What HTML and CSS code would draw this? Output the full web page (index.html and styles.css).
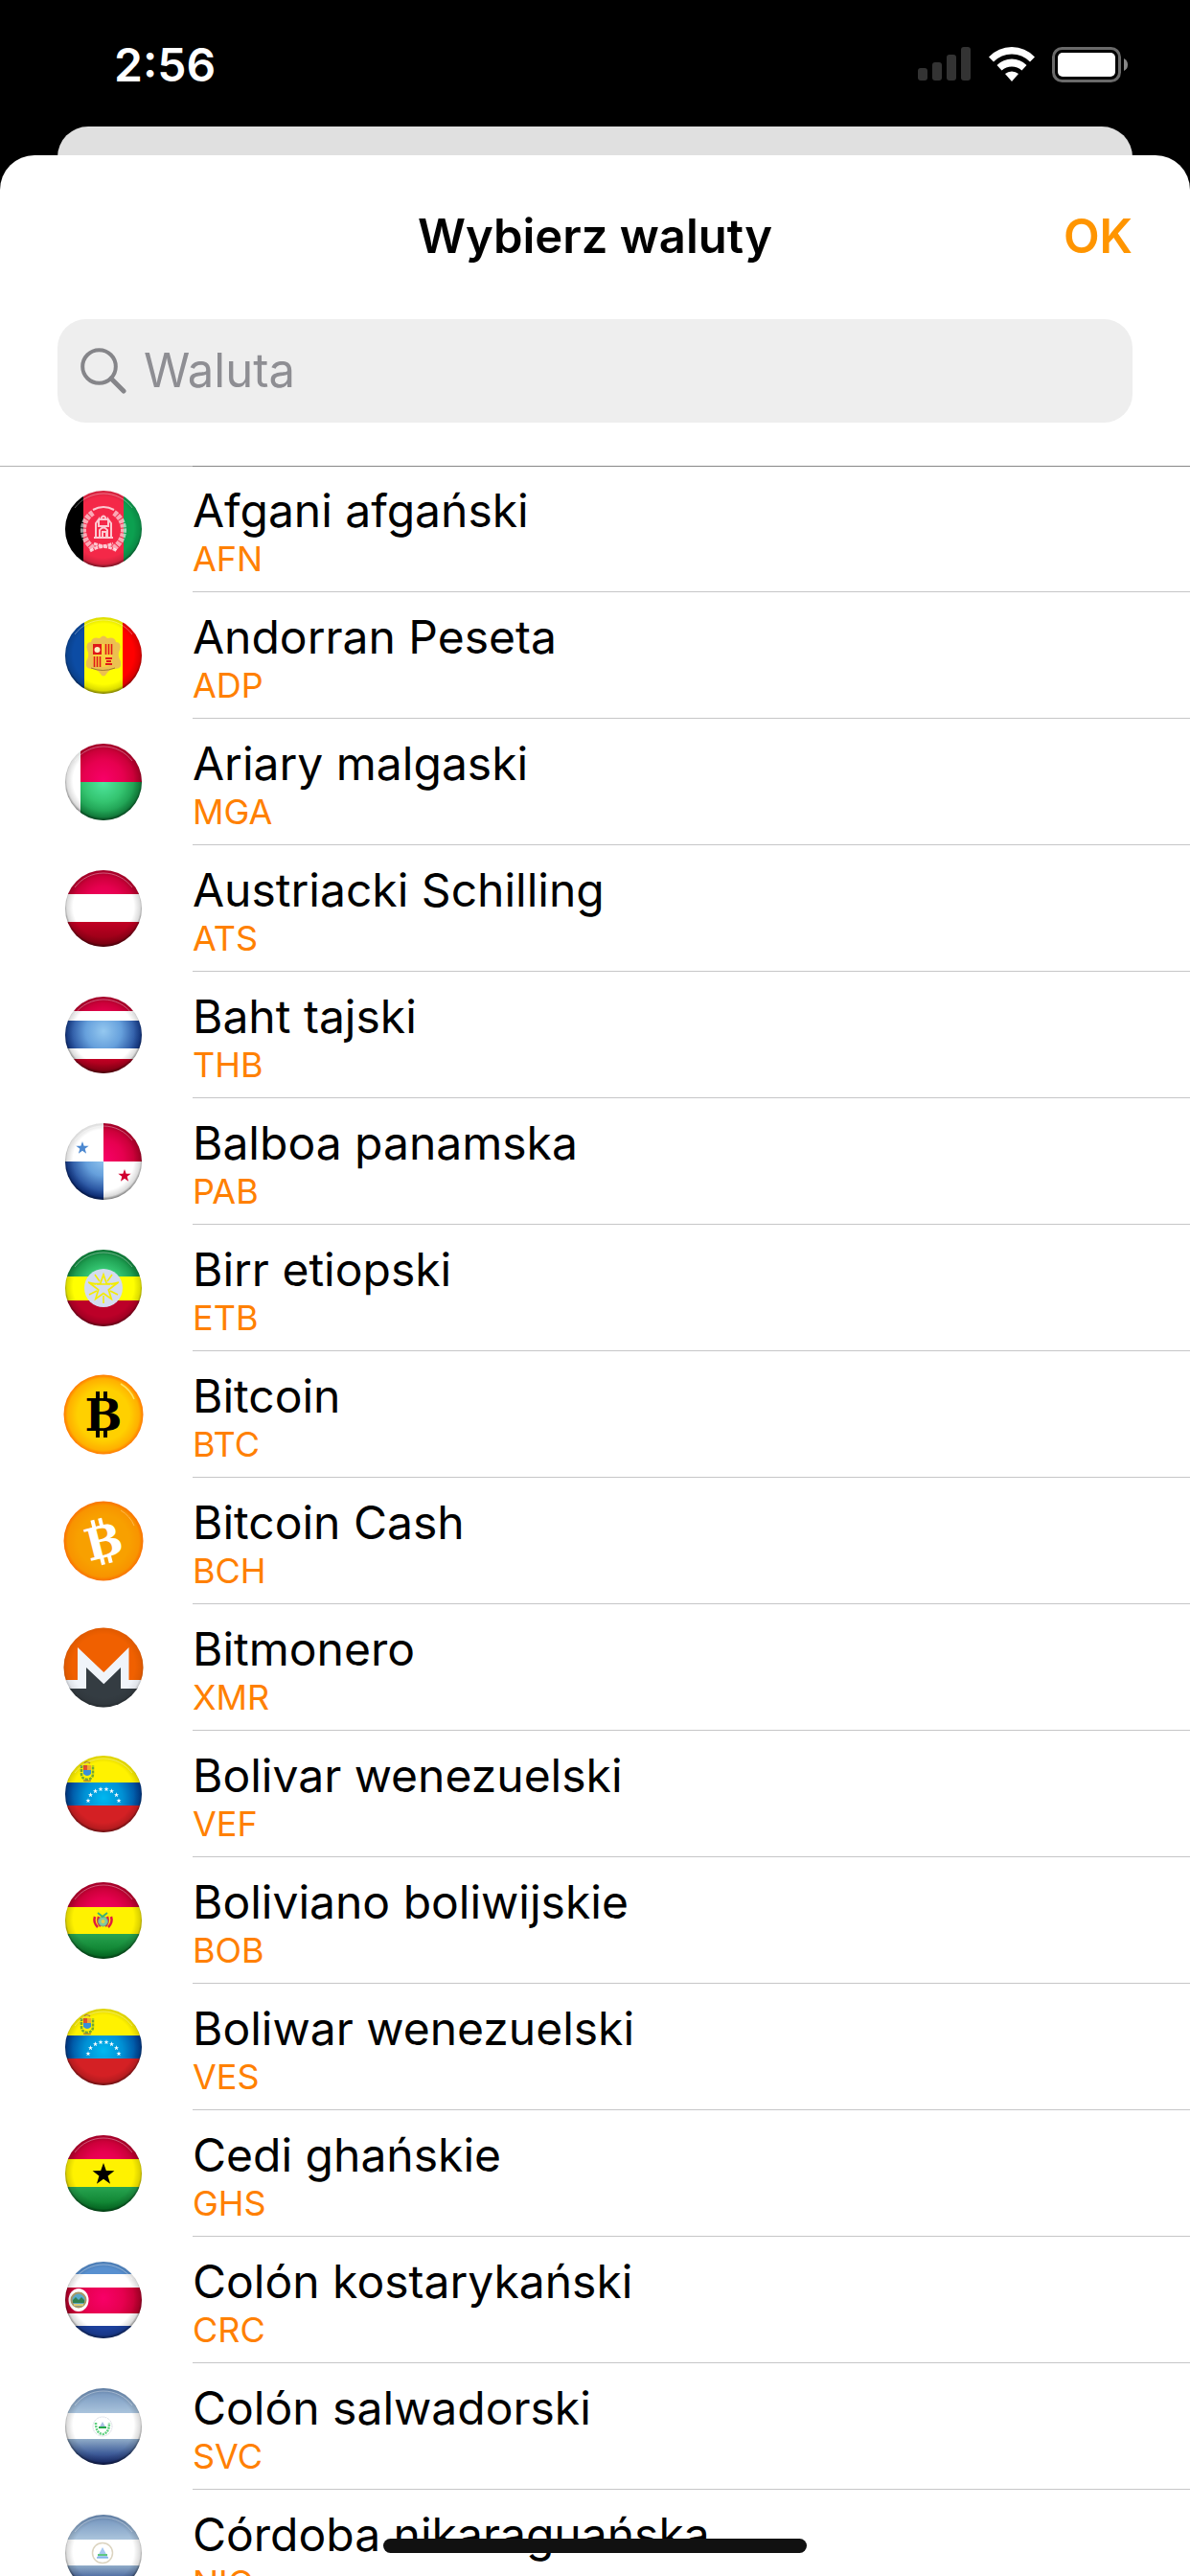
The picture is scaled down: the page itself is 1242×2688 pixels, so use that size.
FILE: index.html
```html
<!DOCTYPE html>
<html lang="pl">
  <head>
    <meta charset="UTF-8" />
    <meta name="viewport" content="width=device-width, initial-scale=1.0" />
    <title>Wybierz waluty</title>
    <link rel="stylesheet" href="styles.css">
  </head>
  <body>
    <!-- Shared shapes and flags used more than once -->
    <svg class="defs" aria-hidden="true">
      <defs>
        <clipPath id="round"><circle cx="42" cy="42" r="40" /></clipPath>
        <clipPath id="coin"><circle cx="42" cy="42" r="41.5" /></clipPath>
        <radialGradient id="shade" cx="0.5" cy="0.48" r="0.52">
          <stop offset="0.76" stop-color="#000" stop-opacity="0" />
          <stop offset="0.92" stop-color="#000" stop-opacity="0.14" />
          <stop offset="1" stop-color="#000" stop-opacity="0.55" />
        </radialGradient>
        <radialGradient id="red" gradientUnits="userSpaceOnUse" cx="42" cy="40" r="42">
          <stop offset="0" stop-color="#f80068" />
          <stop offset="0.5" stop-color="#e6004f" />
          <stop offset="1" stop-color="#b00024" />
        </radialGradient>
        <linearGradient id="darkred" x1="0" y1="0" x2="0" y2="1">
          <stop offset="0" stop-color="#c20024" />
          <stop offset="1" stop-color="#840010" />
        </linearGradient>
        <radialGradient id="blue" gradientUnits="userSpaceOnUse" cx="42" cy="38" r="42">
          <stop offset="0" stop-color="#94c8f0" />
          <stop offset="0.45" stop-color="#66a0dc" />
          <stop offset="1" stop-color="#0c3084" />
        </radialGradient>
        <radialGradient id="cyan" gradientUnits="userSpaceOnUse" cx="42" cy="46" r="40">
          <stop offset="0" stop-color="#00b8f0" />
          <stop offset="0.5" stop-color="#0090d4" />
          <stop offset="1" stop-color="#003c90" />
        </radialGradient>
        <linearGradient id="green" x1="0" y1="0" x2="0" y2="1">
          <stop offset="0" stop-color="#28a450" />
          <stop offset="1" stop-color="#007020" />
        </linearGradient>
        <radialGradient id="mint" gradientUnits="userSpaceOnUse" cx="42" cy="42" r="42">
          <stop offset="0" stop-color="#50e8a0" />
          <stop offset="0.5" stop-color="#34c470" />
          <stop offset="1" stop-color="#0c8038" />
        </radialGradient>
        <linearGradient id="steel" x1="0" y1="0" x2="0" y2="1">
          <stop offset="0" stop-color="#6a8cb8" />
          <stop offset="1" stop-color="#aac4dc" />
        </linearGradient>
        <linearGradient id="navy" x1="0" y1="0" x2="0" y2="1">
          <stop offset="0" stop-color="#90acc8" />
          <stop offset="0.5" stop-color="#42609c" />
          <stop offset="1" stop-color="#0c1c64" />
        </linearGradient>
        <radialGradient id="gold" cx="0.5" cy="0.5" r="0.5">
          <stop offset="0.65" stop-color="#ffd000" />
          <stop offset="0.9" stop-color="#ffb000" />
          <stop offset="1" stop-color="#ff7800" />
        </radialGradient>
        <radialGradient id="amber" cx="0.5" cy="0.5" r="0.5">
          <stop offset="0.65" stop-color="#f8a000" />
          <stop offset="0.9" stop-color="#f89400" />
          <stop offset="1" stop-color="#fa7000" />
        </radialGradient>

        <path id="star" d="M0-10 2.35-3.24 9.51-3.09 3.8 1.24 5.88 8.09 0 4 -5.88 8.09 -3.8 1.24 -9.51-3.09 -2.35-3.24Z" />
        <g id="gloss">
          <circle cx="42" cy="42" r="40" fill="url(#shade)" />
          <path d="M12 20A37.500 37.500 0 0 1 72 20" fill="none" stroke="#fff" stroke-opacity="0.35" />
        </g>

        <symbol id="venezuela" viewBox="0 0 84 84">
          <g clip-path="url(#round)">
            <path d="M0 0h84v30H0z" fill="#fff200" />
            <path d="M0 30h84v24H0z" fill="url(#cyan)" />
            <path d="M0 54h84v30H0z" fill="#d42024" />
            <path d="M19 12v9q0 5 6 6 6-1 6-6v-9" fill="none" stroke="#70a830" stroke-width="2.500" stroke-dasharray="3 1" />
            <path d="M21 12h4v5h-4z" fill="#e05030" />
            <path d="M25 12h4v5h-4z" fill="#f0a830" />
            <path d="M21 17h8v4q-4 4-8 0z" fill="#3890d8" />
            <path d="M22 10q3-3 6 0M21 28q4 1 8 0" fill="none" stroke="#b89030" stroke-width="1.500" />
            <g fill="#fff">
              <use href="#star" transform="translate(26 49) scale(.27)" />
              <use href="#star" transform="translate(28.500 43) scale(.27)" />
              <use href="#star" transform="translate(33.500 39) scale(.27)" />
              <use href="#star" transform="translate(39 37) scale(.27)" />
              <use href="#star" transform="translate(45 37) scale(.27)" />
              <use href="#star" transform="translate(50.500 39) scale(.27)" />
              <use href="#star" transform="translate(55.500 43) scale(.27)" />
              <use href="#star" transform="translate(58 49) scale(.27)" />
            </g>
          </g>
          <use href="#gloss" />
        </symbol>
        <symbol id="bluewhite" viewBox="0 0 84 84">
          <g clip-path="url(#round)">
            <path d="M0 0h84v84H0z" fill="#fff" />
            <path d="M0 0h84v28H0z" fill="url(#steel)" />
            <path d="M0 55h84v29H0z" fill="url(#navy)" />
          </g>
          <use href="#gloss" />
        </symbol>
      </defs>
    </svg>

    <div class="status-bar">
      <span class="time">2:56</span>
      <div class="status-icons">
        <svg width="56" height="36" viewBox="0 0 56 36" fill="#333">
          <rect x="0" y="22" width="10" height="13" rx="3" />
          <rect x="15" y="16" width="10" height="19" rx="3" />
          <rect x="30" y="8" width="10" height="27" rx="3" />
          <rect x="45" y="0" width="10" height="35" rx="3" />
        </svg>
        <svg width="48" height="36" viewBox="0 0 48 36" fill="#fff">
          <path d="M0 10.500Q10 0 24 0T48 10.500L43 15.500Q35 7.500 24 7.500T5 15.500Z" />
          <path d="M8.500 19Q15 12.500 24 12.500T39.500 19L34.500 24.500Q30 20.500 24 20.500T13.500 24.500Z" />
          <path d="M17 28Q20 25.500 24 25.500T31 28L24 36Z" />
        </svg>
        <svg width="80" height="38" viewBox="0 0 80 38">
          <rect x="1.500" y="1.500" width="69" height="34" rx="9" fill="none" stroke="#6a6a6a" stroke-width="3" />
          <rect x="6" y="6" width="60" height="25" rx="5" fill="#fff" />
          <path d="M75 12Q79 14 79 18.500T75 25Z" fill="#888" />
        </svg>
      </div>
    </div>

    <div class="sheet-behind"></div>

    <main class="sheet">
      <header class="sheet-header">
        <div class="title-row">
          <h1>Wybierz waluty</h1>
          <button class="btn-ok" type="button">OK</button>
        </div>
        <label class="search">
          <svg width="48" height="48" viewBox="0 0 48 48" fill="none" stroke="#858589" stroke-width="4" stroke-linecap="round" aria-hidden="true">
            <circle cx="19.500" cy="19.500" r="17.300" />
            <path d="M32 32 45 45" stroke-width="5" />
          </svg>
          <input type="search" placeholder="Waluta" aria-label="Waluta">
        </label>
      </header>

      <ul class="currencies">
        <li class="row">
          <svg class="flag" viewBox="0 0 84 84">
            <g clip-path="url(#round)">
              <path d="M0 0h21v84H0z" fill="#000" />
              <path d="M21 0h42v84H21z" fill="#f42848" />
              <path d="M63 0h21v84H63z" fill="#0ca050" />
              <g fill="none" stroke="#fff" stroke-opacity="0.75">
                <path d="M31 25q-10 7-10 18t11 20M53 25q10 7 10 18t-11 20" stroke-width="6" stroke-dasharray="4 1" opacity="0.8" />
                <path d="M34 51V36l3-4v7h10v-7l3 4v15M32 51h20M38 50v-7q4-5 8 0v7M41 50v-5h4v5" stroke-width="2" />
                <path d="M39 32q3-7 6 0zM31 22q11-6 22 0" stroke-width="2" />
                <path d="M28 65q14-9 28 0M32 57q10 5 20 0" stroke-width="3" stroke-dasharray="4 1" />
              </g>
            </g>
            <use href="#gloss" />
          </svg>
          <div class="info"><span class="name">Afgani afgański</span><span class="code">AFN</span></div>
        </li>
        <li class="row">
          <svg class="flag" viewBox="0 0 84 84">
            <g clip-path="url(#round)">
              <path d="M0 0h22v84H0z" fill="#0c4ca4" />
              <path d="M22 0h40v84H22z" fill="#ff0" />
              <path d="M62 0h22v84H62z" fill="#f00" />
              <path d="M38 24q4-5 8 0 8-2 9 4 6 0 4 8-3 6 1 12 2 8-6 8-5 0-8 4-4 7-8 0-3-4-8-4-8 0-6-8 4-6 1-12-2-8 4-8 1-6 9-4z" fill="#ecc050" />
              <path d="M31 30h20v19q-2 5-10 5t-10-5z" fill="#f8d040" />
              <path d="M31 30h9v11h-9z" fill="#e01818" />
              <circle cx="35.500" cy="36" r="3" fill="#fff0c0" />
              <path d="M44.500 30v11M47.500 30v11M50.500 30v11M32.500 43v11M35.500 43v11M38.500 43v11" stroke="#e01818" stroke-width="1.600" />
              <path d="M44 45h7M45 48h5M44 51h7" stroke="#e01818" stroke-width="2" />
              <path d="M29 55q12 5 25 0" stroke="#a07830" fill="none" />
            </g>
            <use href="#gloss" />
          </svg>
          <div class="info"><span class="name">Andorran Peseta</span><span class="code">ADP</span></div>
        </li>
        <li class="row">
          <svg class="flag" viewBox="0 0 84 84">
            <g clip-path="url(#round)">
              <path d="M0 0h18v84H0z" fill="#fff" />
              <path d="M18 0h66v42H18z" fill="url(#red)" />
              <path d="M18 42h66v42H18z" fill="url(#mint)" />
            </g>
            <use href="#gloss" />
          </svg>
          <div class="info"><span class="name">Ariary malgaski</span><span class="code">MGA</span></div>
        </li>
        <li class="row">
          <svg class="flag" viewBox="0 0 84 84">
            <g clip-path="url(#round)">
              <path d="M0 0h84v27H0z" fill="url(#red)" />
              <path d="M0 27h84v29H0z" fill="#fff" />
              <path d="M0 56h84v28H0z" fill="url(#darkred)" />
            </g>
            <use href="#gloss" />
          </svg>
          <div class="info"><span class="name">Austriacki Schilling</span><span class="code">ATS</span></div>
        </li>
        <li class="row">
          <svg class="flag" viewBox="0 0 84 84">
            <g clip-path="url(#round)">
              <path d="M0 0h84v84H0z" fill="#fff" />
              <path d="M0 0h84v17H0z" fill="url(#red)" />
              <path d="M0 27h84v29H0z" fill="url(#blue)" />
              <path d="M0 67h84v17H0z" fill="url(#darkred)" />
            </g>
            <use href="#gloss" />
          </svg>
          <div class="info"><span class="name">Baht tajski</span><span class="code">THB</span></div>
        </li>
        <li class="row">
          <svg class="flag" viewBox="0 0 84 84">
            <g clip-path="url(#round)">
              <path d="M0 0h84v84H0z" fill="#fff" />
              <path d="M42 0h42v42H42z" fill="url(#red)" />
              <path d="M0 42h42v42H0z" fill="url(#blue)" />
              <use href="#star" transform="translate(20 28) scale(.7)" fill="#4c88d0" />
              <use href="#star" transform="translate(64 57) scale(.7)" fill="#d00030" />
            </g>
            <use href="#gloss" />
          </svg>
          <div class="info"><span class="name">Balboa panamska</span><span class="code">PAB</span></div>
        </li>
        <li class="row">
          <svg class="flag" viewBox="0 0 84 84">
            <g clip-path="url(#round)">
              <path d="M0 0h84v30H0z" fill="url(#mint)" />
              <path d="M0 30h84v25H0z" fill="#ff0" />
              <path d="M0 55h84v29H0z" fill="#bc0028" />
              <circle cx="42" cy="42" r="20" fill="#d4dcf0" />
              <use href="#star" transform="translate(42 42) scale(1.400)" fill="none" stroke="#f4ec00" stroke-width="1.200" />
              <path d="M42 50v8M35 45l-8 4M49 45l8 4M38 35l-5-7M46 35l5-7M34 38l-8-2M50 38l8-2M35 38h14" stroke="#f4ec00" stroke-width="1.500" />
            </g>
            <use href="#gloss" />
          </svg>
          <div class="info"><span class="name">Birr etiopski</span><span class="code">ETB</span></div>
        </li>
        <li class="row">
          <svg class="flag" viewBox="0 0 84 84">
            <circle cx="42" cy="42" r="41.500" fill="url(#gold)" />
            <path d="M60 10q10 6 14 16" fill="none" stroke="#ffe060" stroke-width="1.500" />
            <path d="M34 18h4v8h-4zM42 18h4v8h-4zM34 57h4v9h-4zM42 57h4v9h-4z" />
            <text class="coin-letter" x="42" y="59" text-anchor="middle">B</text>
          </svg>
          <div class="info"><span class="name">Bitcoin</span><span class="code">BTC</span></div>
        </li>
        <li class="row">
          <svg class="flag" viewBox="0 0 84 84">
            <circle cx="42" cy="42" r="41.500" fill="url(#amber)" />
            <path d="M60 10q10 6 14 16" fill="none" stroke="#ffb850" />
            <g fill="#fff" transform="rotate(-14 42 42)">
              <path d="M34 18h4v8h-4zM42 18h4v8h-4zM34 57h4v9h-4zM42 57h4v9h-4z" />
              <text class="coin-letter" x="42" y="59" text-anchor="middle">B</text>
            </g>
          </svg>
          <div class="info"><span class="name">Bitcoin Cash</span><span class="code">BCH</span></div>
        </li>
        <li class="row">
          <svg class="flag" viewBox="0 0 84 84">
            <g clip-path="url(#coin)">
              <path d="M0 0h84v56H0z" fill="#f06000" />
              <path d="M0 63h84v21H0z" fill="#343c42" />
              <path d="M0 55h15V21l27.300 26L68.500 21v34H84v9H0z" fill="#f0f4fa" />
              <path d="M24 65V42l18.300 17.300L60 42v23z" fill="#343c42" />
            </g>
            <circle cx="42" cy="42" r="41.500" fill="url(#shade)" opacity="0.500" />
          </svg>
          <div class="info"><span class="name">Bitmonero</span><span class="code">XMR</span></div>
        </li>
        <li class="row">
          <svg class="flag"><use href="#venezuela" /></svg>
          <div class="info"><span class="name">Bolivar wenezuelski</span><span class="code">VEF</span></div>
        </li>
        <li class="row">
          <svg class="flag" viewBox="0 0 84 84">
            <g clip-path="url(#round)">
              <path d="M0 0h84v28H0z" fill="url(#red)" />
              <path d="M0 28h84v28H0z" fill="#fff200" />
              <path d="M0 56h84v28H0z" fill="url(#green)" />
              <path d="M33 38q-2 6 3 11M37 38q-2 6 2 10M50 38q2 6-3 11M46 38q2 6-2 10" fill="none" stroke="#e01840" stroke-width="2.500" />
              <circle cx="41.500" cy="43" r="5" fill="#80c8a0" stroke="#78a07c" />
              <path d="M36 34l5 4 5-4" fill="none" stroke="#40b070" stroke-width="2" />
              <circle cx="41.500" cy="43" r="2" fill="#e8d040" />
            </g>
            <use href="#gloss" />
          </svg>
          <div class="info"><span class="name">Boliviano boliwijskie</span><span class="code">BOB</span></div>
        </li>
        <li class="row">
          <svg class="flag"><use href="#venezuela" /></svg>
          <div class="info"><span class="name">Boliwar wenezuelski</span><span class="code">VES</span></div>
        </li>
        <li class="row">
          <svg class="flag" viewBox="0 0 84 84">
            <g clip-path="url(#round)">
              <path d="M0 0h84v27H0z" fill="url(#red)" />
              <path d="M0 27h84v29H0z" fill="#fff200" />
              <path d="M0 56h84v28H0z" fill="url(#green)" />
              <use href="#star" transform="translate(42 43) scale(1.200)" />
            </g>
            <use href="#gloss" />
          </svg>
          <div class="info"><span class="name">Cedi ghańskie</span><span class="code">GHS</span></div>
        </li>
        <li class="row">
          <svg class="flag" viewBox="0 0 84 84">
            <g clip-path="url(#round)">
              <path d="M0 0h84v84H0z" fill="#fff" />
              <path d="M0 0h84v15H0z" fill="#5890d0" />
              <path d="M0 29h84v27H0z" fill="url(#red)" />
              <path d="M0 69h84v15H0z" fill="#1c409c" />
              <ellipse cx="16" cy="42" rx="10.500" ry="12" fill="#fff" />
              <circle cx="16" cy="42" r="7.500" fill="#58a8c8" stroke="#a89868" stroke-width="2" />
              <path d="M10 42l3-3 3 3 3-3 3 3v3H10z" fill="#308050" />
              <path d="M11 47h10" stroke="#d8c878" stroke-width="2" />
            </g>
            <use href="#gloss" />
          </svg>
          <div class="info"><span class="name">Colón kostarykański</span><span class="code">CRC</span></div>
        </li>
        <li class="row">
          <svg class="flag" viewBox="0 0 84 84">
            <use href="#bluewhite" />
            <circle cx="41" cy="42" r="10" fill="none" stroke="#c8ccd8" stroke-dasharray="1 1" />
            <path d="M34 38q0 11 7 12 7-1 7-12" fill="none" stroke="#60d080" stroke-width="2.500" stroke-dasharray="2 1" />
            <path d="M37 44l4-7 4 7z" fill="#a8c0e0" />
            <path d="M37 43h8" stroke="#20a848" stroke-width="2" />
          </svg>
          <div class="info"><span class="name">Colón salwadorski</span><span class="code">SVC</span></div>
        </li>
        <li class="row">
          <svg class="flag" viewBox="0 0 84 84">
            <use href="#bluewhite" />
            <circle cx="41" cy="42" r="10.500" fill="none" stroke="#dcd4c0" stroke-width="1.500" />
            <path d="M35 47l6-11 6 11z" fill="#a8c8f0" />
            <path d="M36 44h10" stroke="#60c880" stroke-width="2" />
            <path d="M35 47h12" stroke="#60a0e0" />
          </svg>
          <div class="info"><span class="name">Córdoba nikaraguańska</span><span class="code">NIO</span></div>
        </li>
      </ul>
    </main>

    <div class="home-indicator"></div>
  </body>
</html>
```

FILE: styles.css
```css
* {
  box-sizing: border-box;
}
body {
  margin: 0;
  height: 100vh;
  display: flex;
  flex-direction: column;
  overflow: hidden;
  background: #000;
  color: #000;
  font-family: Inter, "Liberation Sans", sans-serif;
}
.defs {
  position: absolute;
  width: 0;
  height: 0;
}

/* status bar */
.status-bar {
  flex: none;
  height: 132px;
  padding: 38px 64px 0 119px;
  display: flex;
  justify-content: space-between;
  align-items: flex-start;
}
.time {
  color: #fff;
  font-size: 48px;
  line-height: 60px;
  font-weight: 600;
}
.status-icons {
  display: flex;
  align-items: flex-start;
  gap: 18px;
  padding-top: 11px;
}

/* sheets */
.sheet-behind {
  flex: none;
  height: 60px;
  margin: 0 60px -30px;
  border-radius: 32px 32px 0 0;
  background: #e0e0e0;
}
.sheet {
  flex: 1;
  min-height: 0;
  display: flex;
  flex-direction: column;
  border-radius: 36px 36px 0 0;
  background: #fff;
}
.sheet-header {
  flex: none;
  padding: 49px 60px 45px;
  border-bottom: 1px solid #b2b2b2;
}
.title-row {
  display: grid;
  grid-template-columns: 1fr auto 1fr;
  margin-bottom: 50px;
}
h1 {
  grid-column: 2;
  margin: 0;
  font-size: 49px;
  line-height: 72px;
  font-weight: 600;
}
.btn-ok {
  justify-self: end;
  padding: 0;
  border: 0;
  background: none;
  color: #ff9500;
  font: inherit;
  font-size: 49px;
  line-height: 72px;
  font-weight: 600;
  cursor: pointer;
}
.search {
  display: flex;
  align-items: center;
  gap: 18px;
  height: 108px;
  padding: 0 24px;
  border-radius: 30px;
  background: #eee;
}
.search input {
  flex: 1;
  min-width: 0;
  padding: 0;
  border: 0;
  outline: 0;
  background: none;
  font: inherit;
  font-size: 49px;
  line-height: 60px;
  appearance: none;
}
.search input::placeholder {
  color: #8e8e93;
  opacity: 1;
}

/* currency list */
.currencies {
  flex: 1;
  min-height: 0;
  margin: -1px 0 0;
  padding: 0;
  list-style: none;
  overflow-y: auto;
  scrollbar-width: none;
}
.row {
  display: flex;
  align-items: center;
  gap: 51px;
  height: 132px;
  padding-left: 66px;
}
.flag {
  flex: none;
  width: 84px;
  height: 84px;
}
.coin-letter {
  font-family: "DejaVu Serif", serif;
  font-size: 46px;
  font-weight: 700;
}
.info {
  flex: 1;
  display: flex;
  flex-direction: column;
  height: 132px;
  padding-top: 19px;
  border-bottom: 1px solid #c6c6c8;
}
.row:first-child .info {
  padding-top: 18px;
  border-top: 1px solid #888;
}
.name {
  font-size: 48px;
  line-height: 56px;
}
.code {
  color: #ff8000;
  font-size: 36px;
  line-height: 44px;
}

.home-indicator {
  position: fixed;
  left: 50%;
  bottom: 24px;
  width: 442px;
  height: 15px;
  transform: translateX(-50%);
  border-radius: 8px;
  background: #111;
}
```
